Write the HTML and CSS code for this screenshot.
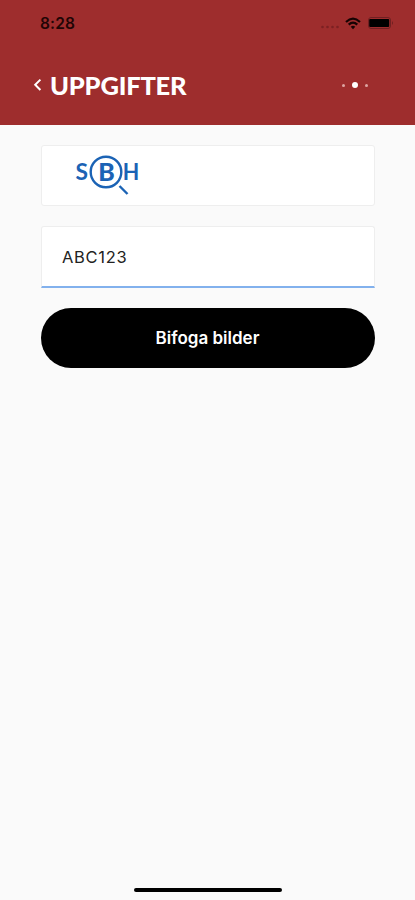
FILE: index.html
```html
<!DOCTYPE html>
<html lang="sv">
  <head>
    <meta charset="UTF-8" />
    <meta name="viewport" content="width=device-width, initial-scale=1.0" />
    <title>Uppgifter</title>
    <link rel="stylesheet" href="styles.css">
  </head>
  <body>
    <header class="header">
      <div class="status-bar">
        <span class="time">8:28</span>
        <div class="status-icons">
          <svg class="signal" width="20" height="4" viewBox="0 0 20 4">
            <circle cx="2.5" cy="2" r="1.3" />
            <circle cx="7.5" cy="2" r="1.3" />
            <circle cx="12.5" cy="2" r="1.3" />
            <circle cx="17.5" cy="2" r="1.3" />
          </svg>
          <svg class="wifi" width="16" height="13" viewBox="0 0 16 13">
            <path d="M1 5 Q8 -1.6 15 5" />
            <path d="M3.7 7.6 Q8 3.7 12.3 7.6" />
            <path class="wifi-dot" d="M5.7 9.8 Q8 7.9 10.3 9.8 L8 12.3 Z" />
          </svg>
          <svg class="battery" width="26" height="12" viewBox="0 0 26 12">
            <rect class="battery-case" x="0.5" y="0.5" width="22" height="11" rx="2.5" />
            <rect x="1.2" y="2" width="20" height="8" rx="1" />
            <path class="battery-tip" d="M24 4 Q26 6 24 8 Z" />
          </svg>
        </div>
      </div>
      <nav class="nav">
        <a class="back">
          <svg width="9" height="14" viewBox="0 0 9 14">
            <path d="M7.4 1.6 L2.2 6.8 L7.4 12" />
          </svg>
        </a>
        <h1>UPPGIFTER</h1>
        <div class="dots">
          <span class="dot"></span>
          <span class="dot active"></span>
          <span class="dot"></span>
        </div>
      </nav>
    </header>

    <form class="form">
      <div class="logo-box">
        <svg class="logo" width="66" height="44" viewBox="0 0 66 44">
          <text x="1.5" y="26.8" font-size="22" textLength="12.5" lengthAdjust="spacingAndGlyphs">S</text>
          <circle cx="32" cy="19" r="15.3" />
          <text class="logo-b" x="24.3" y="28" font-size="25" textLength="16.5" lengthAdjust="spacingAndGlyphs">B</text>
          <text x="48.8" y="26.8" font-size="22" textLength="16.5" lengthAdjust="spacingAndGlyphs">H</text>
          <path d="M45.5 33 L53.5 41" />
        </svg>
      </div>
      <input class="reg" name="reg" value="ABC123" />
      <button type="button">Bifoga bilder</button>
    </form>

    <div class="home-bar"></div>
  </body>
</html>
```

FILE: styles.css
```css
* {
  box-sizing: border-box;
}

body {
  font-family: Inter, "Liberation Sans", sans-serif;
  background: #fafafa;
  margin: 0;
  height: 900px;
  display: flex;
  flex-direction: column;
  overflow: hidden;
}

.header {
  background: #9e2d2d;
  height: 125px;
}

.status-bar {
  display: flex;
  justify-content: space-between;
  align-items: center;
  height: 46px;
  padding: 0 21px 0 40px;
}

.time {
  color: #210505;
  font-size: 15.5px;
  font-weight: 600;
  letter-spacing: 0.2px;
}

.status-icons {
  display: flex;
  align-items: center;
}

.signal {
  fill: #7c2022;
  margin: 8px 5px 0 0;
}

.wifi {
  fill: none;
  stroke: #160303;
  stroke-width: 2.2;
  margin-right: 7px;
}

.wifi-dot {
  fill: #160303;
  stroke: none;
}

.battery {
  fill: #000;
}

.battery-case {
  fill: none;
  stroke: #702022;
}

.battery-tip {
  fill: #702022;
}

.nav {
  display: flex;
  align-items: center;
  height: 78px;
  padding: 0 47px 0 33px;
}

.back {
  display: flex;
  width: 17px;
}

.back svg {
  fill: none;
  stroke: #fff;
  stroke-width: 2;
}

h1 {
  color: #fff;
  font-family: Lato, sans-serif;
  font-size: 25.5px;
  font-weight: 900;
  letter-spacing: -0.2px;
  line-height: 30px;
  margin: -1px 0 0;
}

.dots {
  display: flex;
  align-items: center;
  gap: 7px;
  margin-left: auto;
}

.dot {
  width: 3px;
  height: 3px;
  border-radius: 50%;
  background: #dda5a2;
}

.dot.active {
  width: 6px;
  height: 6px;
  background: #fff;
}

.form {
  display: flex;
  flex-direction: column;
  gap: 20px;
  padding: 20px 40px 0 41px;
}

.logo-box {
  display: flex;
  height: 61px;
  padding: 7px 0 0 32px;
  background: #fff;
  border: 1px solid #eee;
  border-radius: 3px;
}

.logo {
  fill: #1b63b5;
}

.logo text {
  font-family: Lato, sans-serif;
  font-weight: 700;
}

.logo .logo-b {
  font-weight: 900;
}

.logo circle,
.logo path {
  fill: none;
  stroke: #1b63b5;
  stroke-width: 2.4;
}

.reg {
  width: 100%;
  height: 62px;
  padding: 0 20px;
  background: #fff;
  border: 1px solid #eee;
  border-bottom: 2px solid #82b1ed;
  border-radius: 3px 3px 0 0;
  outline: none;
  color: #222;
  font-family: inherit;
  font-size: 16.5px;
  letter-spacing: 0.7px;
}

button {
  height: 60px;
  padding: 0 1px 0 0;
  background: #000;
  color: #fff;
  border: none;
  border-radius: 30px;
  font-family: inherit;
  font-size: 17px;
  font-weight: 600;
}

.home-bar {
  width: 148px;
  height: 4px;
  margin: auto auto 8px 134px;
  background: #000;
  border-radius: 2px;
}
```
